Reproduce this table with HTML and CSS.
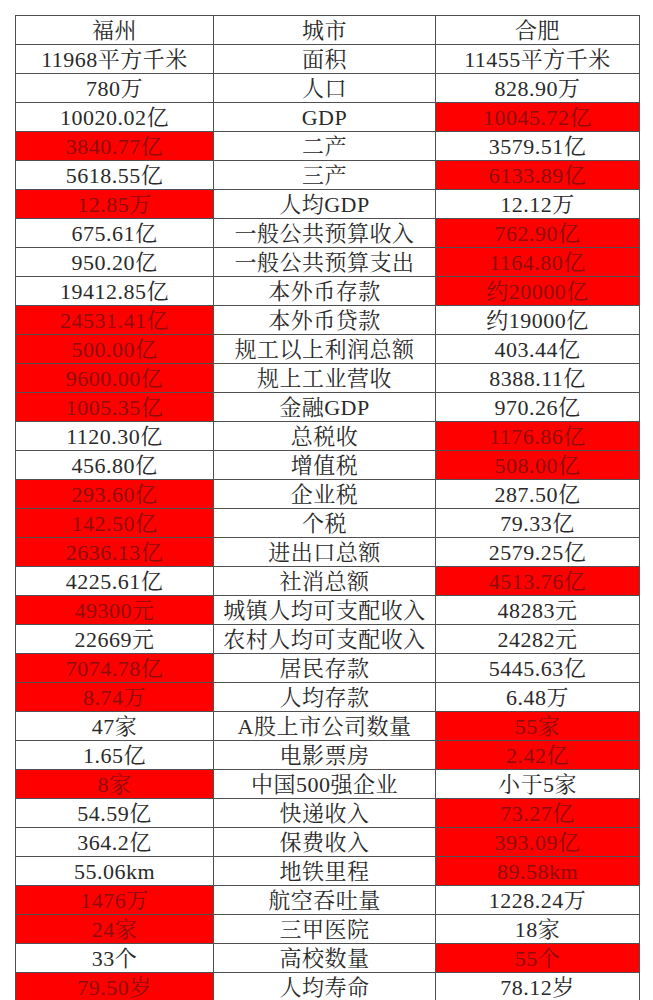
FILE: index.html
```html
<!DOCTYPE html>
<html lang="zh-CN">
<head>
<meta charset="utf-8">
<title>福州 合肥 对比</title>
<link rel="stylesheet" href="styles.css">
</head>
<body>
<table class="cmp">
<colgroup><col class="c1"><col class="c2"><col class="c3"></colgroup>
<tr><td>福州</td><td>城市</td><td>合肥</td></tr>
<tr><td>11968平方千米</td><td>面积</td><td>11455平方千米</td></tr>
<tr><td>780万</td><td>人口</td><td>828.90万</td></tr>
<tr><td>10020.02亿</td><td>GDP</td><td class="hi">10045.72亿</td></tr>
<tr><td class="hi">3840.77亿</td><td>二产</td><td>3579.51亿</td></tr>
<tr><td>5618.55亿</td><td>三产</td><td class="hi">6133.89亿</td></tr>
<tr><td class="hi">12.85万</td><td>人均GDP</td><td>12.12万</td></tr>
<tr><td>675.61亿</td><td>一般公共预算收入</td><td class="hi">762.90亿</td></tr>
<tr><td>950.20亿</td><td>一般公共预算支出</td><td class="hi">1164.80亿</td></tr>
<tr><td>19412.85亿</td><td>本外币存款</td><td class="hi">约20000亿</td></tr>
<tr><td class="hi">24531.41亿</td><td>本外币贷款</td><td>约19000亿</td></tr>
<tr><td class="hi">500.00亿</td><td>规工以上利润总额</td><td>403.44亿</td></tr>
<tr><td class="hi">9600.00亿</td><td>规上工业营收</td><td>8388.11亿</td></tr>
<tr><td class="hi">1005.35亿</td><td>金融GDP</td><td>970.26亿</td></tr>
<tr><td>1120.30亿</td><td>总税收</td><td class="hi">1176.86亿</td></tr>
<tr><td>456.80亿</td><td>增值税</td><td class="hi">508.00亿</td></tr>
<tr><td class="hi">293.60亿</td><td>企业税</td><td>287.50亿</td></tr>
<tr><td class="hi">142.50亿</td><td>个税</td><td>79.33亿</td></tr>
<tr><td class="hi">2636.13亿</td><td>进出口总额</td><td>2579.25亿</td></tr>
<tr><td>4225.61亿</td><td>社消总额</td><td class="hi">4513.76亿</td></tr>
<tr><td class="hi">49300元</td><td>城镇人均可支配收入</td><td>48283元</td></tr>
<tr><td>22669元</td><td>农村人均可支配收入</td><td>24282元</td></tr>
<tr><td class="hi">7074.78亿</td><td>居民存款</td><td>5445.63亿</td></tr>
<tr><td class="hi">8.74万</td><td>人均存款</td><td>6.48万</td></tr>
<tr><td>47家</td><td>A股上市公司数量</td><td class="hi">55家</td></tr>
<tr><td>1.65亿</td><td>电影票房</td><td class="hi">2.42亿</td></tr>
<tr><td class="hi">8家</td><td>中国500强企业</td><td>小于5家</td></tr>
<tr><td>54.59亿</td><td>快递收入</td><td class="hi">73.27亿</td></tr>
<tr><td>364.2亿</td><td>保费收入</td><td class="hi">393.09亿</td></tr>
<tr><td>55.06km</td><td>地铁里程</td><td class="hi">89.58km</td></tr>
<tr><td class="hi">1476万</td><td>航空吞吐量</td><td>1228.24万</td></tr>
<tr><td class="hi">24家</td><td>三甲医院</td><td>18家</td></tr>
<tr><td>33个</td><td>高校数量</td><td class="hi">55个</td></tr>
<tr><td class="hi">79.50岁</td><td>人均寿命</td><td>78.12岁</td></tr>
</table>
</body>
</html>
```

FILE: styles.css
```css
html, body {
  margin: 0;
  padding: 0;
  background: #ffffff;
}
body {
  padding: 15px 0 0 15px;
  font-family: "Liberation Serif", "Noto Serif CJK SC", "Noto Sans CJK SC", serif;
  color: #2a2a2a;
}
.cmp {
  border-collapse: collapse;
  table-layout: fixed;
  width: 624px;
}
.c1 { width: 198px; }
.c2 { width: 222px; }
.c3 { width: 204px; }
.cmp td {
  border: 1px solid #505050;
  height: 28px;
  box-sizing: border-box;
  padding: 2px 0 0;
  text-align: center;
  vertical-align: middle;
  font-size: 22px;
  letter-spacing: 0.5px;
  line-height: 26px;
  white-space: nowrap;
  overflow: hidden;
}
.cmp td.hi {
  background: #fe0000;
  color: #8e0c0c;
}
```
